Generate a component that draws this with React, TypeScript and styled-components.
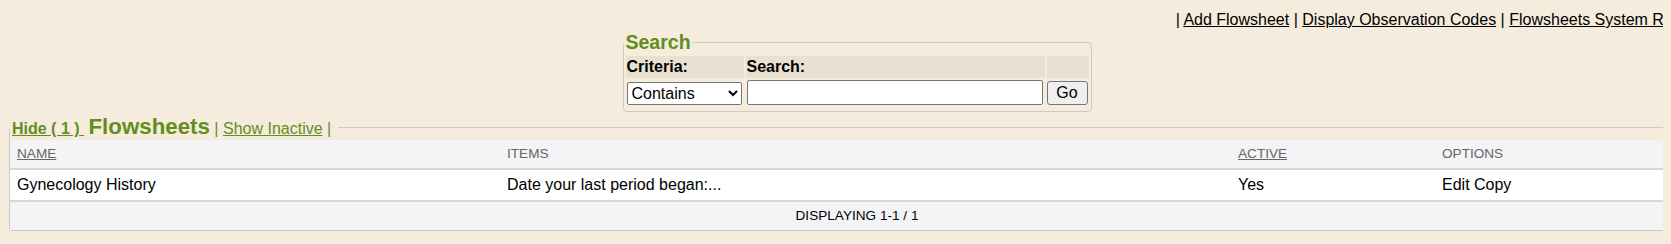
import React from "react";
import styled, { createGlobalStyle } from "styled-components";

const GlobalStyle = createGlobalStyle`
  html { overflow: hidden; }
  body {
    margin: 8px;
    background: #f5ecdd;
    font-family: "Liberation Sans", Arial, sans-serif;
    color: #000;
  }
`;

const GREEN = "#648c1e";

const Page = styled.div`
  width: 1698px;
`;

const TopLinks = styled.div`
  text-align: right;
  font-size: 16px;
  line-height: 18px;
  padding-top: 3px;
  margin-right: -3px;
  white-space: nowrap;
`;

const TopLink = styled.a`
  color: #000;
  text-decoration: underline;
  cursor: pointer;
`;

const SearchBox = styled.fieldset`
  box-sizing: border-box;
  width: 469px;
  margin: 2px auto 0;
  padding: 0 0 4px;
  border: 1px solid #cfcac0;
  border-radius: 4px;
  min-width: 0;
`;

const SearchLegend = styled.legend`
  padding: 0 2px;
  font-size: 19.5px;
  font-weight: bold;
  color: ${GREEN};
`;

const SearchTable = styled.table`
  width: 100%;
  border-spacing: 2px;
  border-collapse: separate;
`;

const SearchHead = styled.th<{ $w?: number }>`
  background: #e8e1d1;
  font-size: 16px;
  line-height: 18px;
  font-weight: bold;
  text-align: left;
  padding: 2px 1px;
  width: ${(p) => (p.$w ? `${p.$w}px` : "auto")};
`;

const SearchCell = styled.td`
  padding: 0;
  vertical-align: middle;
`;

const Select = styled.select`
  box-sizing: border-box;
  width: 115px;
  height: 23px;
  margin: 2px 1px 0;
  font-family: "Liberation Sans", Arial, sans-serif;
  font-size: 16px;
  background: #fff;
  border: 1px solid #767676;
  border-radius: 2px;
  color: #000;
`;

const TextInput = styled.input`
  box-sizing: border-box;
  width: 296px;
  height: 25px;
  margin: 0 0 0 1px;
  border: 1px solid #767676;
  border-radius: 2px;
  background: #fff;
  font-size: 16px;
`;

const GoButton = styled.button`
  box-sizing: border-box;
  width: 41px;
  height: 24px;
  margin-left: 0;
  font-family: "Liberation Sans", Arial, sans-serif;
  font-size: 16px;
  background: #efefef;
  border: 1px solid #767676;
  border-radius: 3px;
  color: #000;
  padding: 0;
`;

const ListBox = styled.fieldset`
  margin: 2px 1px 0;
  padding: 0;
  border: 1px solid #cfcac0;
  border-radius: 3px;
  min-width: 0;
`;

const ListLegend = styled.legend`
  padding: 0 2px;
  font-size: 16px;
  color: ${GREEN};
  white-space: nowrap;
`;

const HideLink = styled.a`
  color: ${GREEN};
  font-weight: bold;
  text-decoration: underline;
  cursor: pointer;
`;

const Title = styled.span`
  font-size: 22.3px;
  font-weight: bold;
`;

const PlainLink = styled.a`
  color: ${GREEN};
  text-decoration: underline;
  cursor: pointer;
`;

const Grid = styled.table`
  width: 100%;
  border-collapse: collapse;
  table-layout: fixed;
`;

const Col = styled.col<{ $w?: number }>`
  width: ${(p) => (p.$w ? `${p.$w}px` : "auto")};
`;

const HeadCell = styled.th`
  background: #f4f4f6;
  color: #666;
  font-size: 13.6px;
  line-height: 16px;
  font-weight: normal;
  text-align: left;
  padding: 6px 7px;
  border-bottom: 2px solid #d6d6d6;
`;

const HeadLink = styled.a`
  color: #666;
  text-decoration: underline;
  cursor: pointer;
`;

const BodyCell = styled.td`
  background: #fff;
  font-size: 16px;
  line-height: 18px;
  padding: 6px 7px;
  border-bottom: 2px solid #d6d6d6;
`;

const FootCell = styled.td`
  background: #f4f4f6;
  font-size: 13.6px;
  line-height: 16px;
  text-align: center;
  padding: 6px 7px;
`;

export default function App() {
  return (
    <>
      <GlobalStyle />
      <Page>
        <TopLinks>
          | <TopLink>Add Flowsheet</TopLink> | <TopLink>Display Observation Codes</TopLink> |{" "}
          <TopLink>Flowsheets System Report</TopLink> |
        </TopLinks>

        <SearchBox>
          <SearchLegend>Search</SearchLegend>
          <SearchTable>
            <tbody>
              <tr>
                <SearchHead $w={116}>Criteria:</SearchHead>
                <SearchHead $w={297}>Search:</SearchHead>
                <SearchHead />
              </tr>
              <tr>
                <SearchCell>
                  <Select defaultValue="contains">
                    <option value="contains">Contains</option>
                    <option value="equals">Equals</option>
                    <option value="starts">Starts With</option>
                  </Select>
                </SearchCell>
                <SearchCell>
                  <TextInput type="text" />
                </SearchCell>
                <SearchCell>
                  <GoButton>Go</GoButton>
                </SearchCell>
              </tr>
            </tbody>
          </SearchTable>
        </SearchBox>

        <ListBox>
          <ListLegend>
            <HideLink>Hide ( 1 ){"\u00a0"}</HideLink> <Title>Flowsheets</Title> |{" "}
            <PlainLink>Show Inactive</PlainLink> |{"\u00a0"}
          </ListLegend>
          <Grid>
            <colgroup>
              <Col $w={490} />
              <Col $w={731} />
              <Col $w={204} />
              <Col />
            </colgroup>
            <thead>
              <tr>
                <HeadCell>
                  <HeadLink>NAME</HeadLink>
                </HeadCell>
                <HeadCell>ITEMS</HeadCell>
                <HeadCell>
                  <HeadLink>ACTIVE</HeadLink>
                </HeadCell>
                <HeadCell>OPTIONS</HeadCell>
              </tr>
            </thead>
            <tbody>
              <tr>
                <BodyCell>Gynecology History</BodyCell>
                <BodyCell>Date your last period began:...</BodyCell>
                <BodyCell>Yes</BodyCell>
                <BodyCell>Edit Copy</BodyCell>
              </tr>
            </tbody>
            <tfoot>
              <tr>
                <FootCell colSpan={4}>DISPLAYING 1-1 / 1</FootCell>
              </tr>
            </tfoot>
          </Grid>
        </ListBox>
      </Page>
    </>
  );
}
